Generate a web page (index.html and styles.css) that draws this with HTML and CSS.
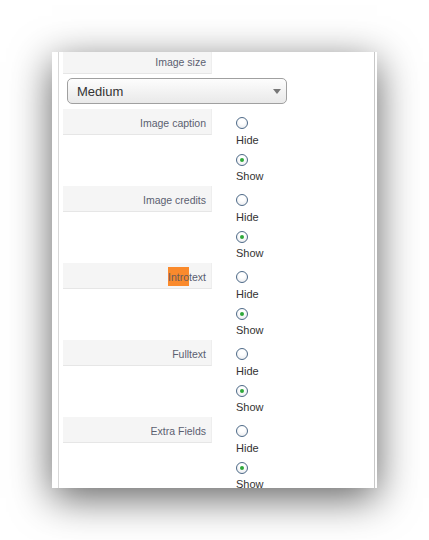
FILE: index.html
```html
<!DOCTYPE html>
<html>
	<head>
		<meta charset="UTF-8">
		<title>Item view options</title>
		<link rel="stylesheet" href="styles.css">
	</head>
	<body>
		<div class="dialog">
			<div class="panel">
				<div class="paramsList">
					<div class="topRow">
						<div class="paramLabel">Image size</div>
					</div>
					<div class="selectBox">
						<span>Medium</span>
						<i class="arrow"></i>
					</div>

					<div class="paramRow">
						<div class="paramLabel">Image caption</div>
						<div class="options">
							<input type="radio" name="caption" id="caption0"><label for="caption0">Hide</label>
							<input type="radio" name="caption" id="caption1" checked><label for="caption1">Show</label>
						</div>
					</div>
					<div class="paramRow">
						<div class="paramLabel">Image credits</div>
						<div class="options">
							<input type="radio" name="credits" id="credits0"><label for="credits0">Hide</label>
							<input type="radio" name="credits" id="credits1" checked><label for="credits1">Show</label>
						</div>
					</div>
					<div class="paramRow">
						<div class="paramLabel"><span class="found">Intro</span>text</div>
						<div class="options">
							<input type="radio" name="intro" id="intro0"><label for="intro0">Hide</label>
							<input type="radio" name="intro" id="intro1" checked><label for="intro1">Show</label>
						</div>
					</div>
					<div class="paramRow">
						<div class="paramLabel">Fulltext</div>
						<div class="options">
							<input type="radio" name="full" id="full0"><label for="full0">Hide</label>
							<input type="radio" name="full" id="full1" checked><label for="full1">Show</label>
						</div>
					</div>
					<div class="paramRow">
						<div class="paramLabel">Extra Fields</div>
						<div class="options">
							<input type="radio" name="extra" id="extra0"><label for="extra0">Hide</label>
							<input type="radio" name="extra" id="extra1" checked><label for="extra1">Show</label>
						</div>
					</div>
				</div>
			</div>
		</div>
	</body>
</html>
```

FILE: styles.css
```css
*,
*::before,
*::after{
	box-sizing: border-box;
}
body{
	margin: 0;
	padding: 52px;
	background: #fff;
	font-family: "Liberation Sans", Arial, sans-serif;
}
.dialog{
	width: 325px;
	height: 436px;
	background: #fff;
	padding: 0 2px 0 6px;
	overflow: hidden;
	box-shadow: 0 10px 38px rgba(0,0,0,0.62);
}
.panel{
	height: 100%;
	border-left: 1px solid #d8d8d8;
	border-right: 1px solid #c8c8c8;
	overflow: hidden;
}
.paramsList{
	padding-left: 4px;
}
.paramLabel{
	width: 149px;
	height: 26px;
	line-height: 26px;
	padding-top: 1px;
	padding-right: 5px;
	text-align: right;
	font-size: 10.5px;
	color: #5b6070;
	background: #f5f5f5;
	border-bottom: 1px solid #e6e6e6;
	border-right: 1px solid #eee;
	flex-shrink: 0;
}
.topRow .paramLabel{
	margin-top: -4px;
}
.found{
	background: #fa8a2c;
	color: #6a5a5a;
	padding: 4px 0 3px;
}
.selectBox{
	width: 220px;
	height: 26px;
	margin: 4px 0 5px 4px;
	padding-left: 9px;
	padding-top: 1px;
	display: flex;
	align-items: center;
	justify-content: space-between;
	border: 1px solid #a0a0a0;
	border-radius: 5px;
	background: linear-gradient(#fdfdfd, #e9e9e9);
	font-size: 13px;
	color: #333;
}
.selectBox .arrow{
	width: 0;
	height: 0;
	margin-right: 5px;
	border-left: 4px solid transparent;
	border-right: 4px solid transparent;
	border-top: 5px solid #777;
}
.paramRow{
	display: flex;
	margin-bottom: 3px;
}
.options{
	margin-left: 24px;
	padding-top: 8px;
	display: flex;
	flex-direction: column;
	align-items: flex-start;
}
.options input{
	appearance: none;
	-webkit-appearance: none;
	width: 12px;
	height: 12px;
	margin: 0;
	border: 1px solid #4e6a88;
	border-radius: 50%;
	background: radial-gradient(circle at 50% 35%, #fff 30%, #e4e6ea 100%);
	position: relative;
}
.options input:checked::after{
	content: "";
	position: absolute;
	left: 3px;
	top: 3px;
	width: 4px;
	height: 4px;
	border-radius: 50%;
	background: #2fa83a;
}
.options label{
	font-size: 11px;
	line-height: 14px;
	color: #333;
	margin-top: 4px;
}
.options label + input{
	margin-top: 7px;
}
.options label:last-child{
	margin-top: 3px;
}
```
